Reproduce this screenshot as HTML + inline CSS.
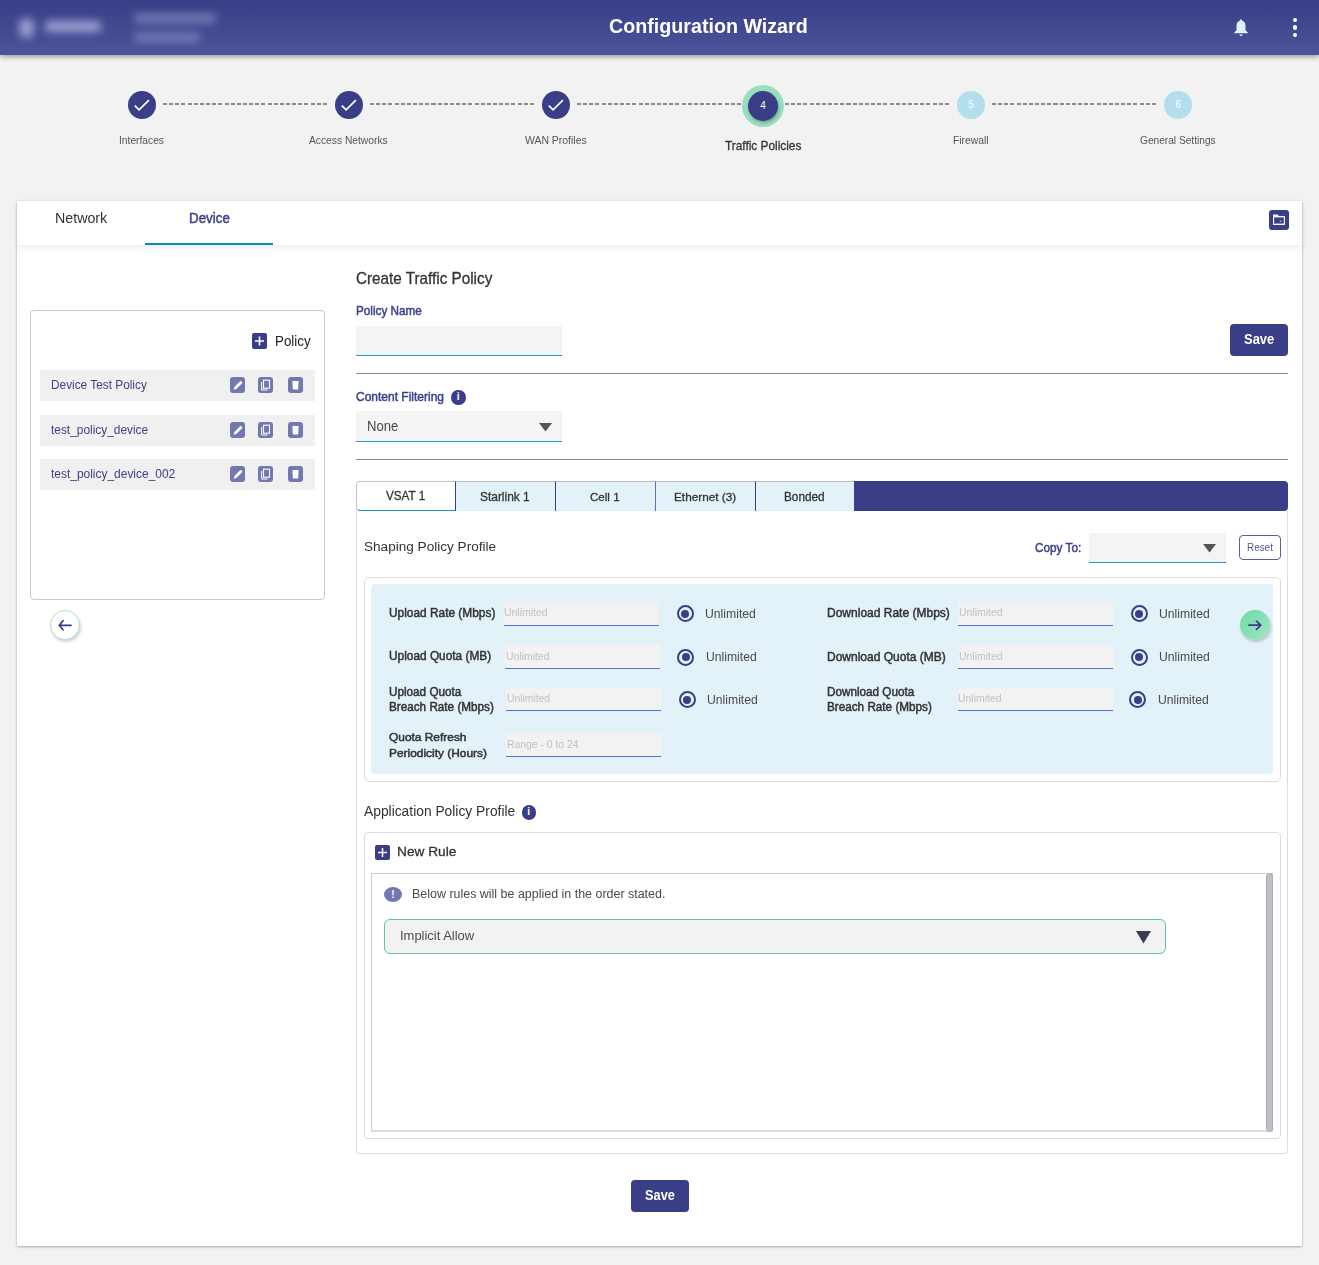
<!DOCTYPE html>
<html><head><meta charset="utf-8">
<style>
*{box-sizing:border-box;margin:0;padding:0}
html,body{width:1319px;height:1265px;overflow:hidden;background:#f2f2f2;font-family:"Liberation Sans",sans-serif;position:relative}
.a{position:absolute;white-space:nowrap;line-height:1}
.hdr{left:0;top:0;width:1319px;height:55px;background:linear-gradient(#393f88,#4d5398);box-shadow:0 2px 5px rgba(0,0,0,.35);z-index:2;overflow:hidden}
.blob{position:absolute;background:#9aa0d0;filter:blur(4px);border-radius:4px}
.title{left:0;width:1319px;text-align:center;color:#fff;font-size:20px;font-weight:bold}
.step{width:28px;height:28px;border-radius:50%;background:#393e87}
.lbl{font-size:11px;color:#555;text-align:center;width:200px}
.dash{height:2px;background:repeating-linear-gradient(90deg,#8c8c8c 0 4px,transparent 4px 6.15px)}
.card{left:17px;top:201px;width:1285px;height:1045px;background:#fff;box-shadow:0 1px 2px rgba(0,0,0,.28),0 0 3px rgba(0,0,0,.08)}
.tabbar{left:17px;top:201px;width:1285px;height:44px;background:#fff;box-shadow:0 3px 6px rgba(0,0,0,.07)}
.prow{left:40px;width:275px;height:31px;background:#f0f0f0}
.ptxt{left:51px;font-size:12.5px;color:#3e428a}
.ico{width:15px;height:16px;border-radius:3px;background:#7378b0}
.purple{color:#3d418a}
.inp{background:#f4f4f4;border-bottom:1px solid #1a9bd0}
.sinp{background:#f2f2f2;border-bottom:1px solid #5b6fdc}
.hr{height:1px;background:#8a8a8a}
.tab{top:481px;height:30px;background:#e3f1f8;font-size:13px;color:#333;text-align:center;line-height:30px}
.flab{font-size:13px;color:#333;font-weight:bold;line-height:15.5px}

.radio{width:17px;height:17px;border-radius:50%;border:2px solid #393e87;background:transparent}
.radio::after{content:"";position:absolute;left:2.5px;top:2.5px;width:8px;height:8px;border-radius:50%;background:#393e87}
.unl{font-size:13px;color:#444}

.t{transform-origin:0 0}
</style></head><body>
<div class="a hdr">
  <div class="blob" style="left:19px;top:18px;width:15px;height:20px;border-radius:8px"></div>
  <div class="blob" style="left:45px;top:21px;width:56px;height:11px"></div>
  <div class="blob" style="left:134px;top:14px;width:82px;height:9px;background:#777db5"></div>
  <div class="blob" style="left:134px;top:33px;width:66px;height:9px;background:#777db5"></div>
  <svg class="a" style="left:1233px;top:19px" width="16" height="18" viewBox="0 0 16 18"><path d="M8 0.5c.8 0 1.2.6 1.2 1.2 2.3.6 3.3 2.6 3.3 5v4.5l2.3 2.2v.8H1.2v-.8l2.3-2.2V6.7c0-2.4 1-4.4 3.3-5 0-.6.4-1.2 1.2-1.2zM6.5 15.6h3c0 1-.7 1.6-1.5 1.6s-1.5-.6-1.5-1.6z" fill="#e0f0f5"/></svg>
  <div class="a" style="left:1292.8px;top:17.8px;width:4.4px;height:4.4px;border-radius:50%;background:#fff"></div>
  <div class="a" style="left:1292.8px;top:25.3px;width:4.4px;height:4.4px;border-radius:50%;background:#fff"></div>
  <div class="a" style="left:1292.8px;top:33px;width:4.4px;height:4.4px;border-radius:50%;background:#fff"></div>
  
</div>
<!-- stepper -->
<div class="a dash" style="left:163px;top:103px;width:164px"></div>
<div class="a dash" style="left:370px;top:103px;width:164px"></div>
<div class="a dash" style="left:577px;top:103px;width:164px"></div>
<div class="a dash" style="left:785px;top:103px;width:164px"></div>
<div class="a dash" style="left:992px;top:103px;width:164px"></div>
<div class="a step" style="left:128px;top:91px"></div>
<div class="a step" style="left:335px;top:91px"></div>
<div class="a step" style="left:542px;top:91px"></div>
<div class="a step" style="left:957px;top:91px;background:#b3deec"></div>
<div class="a step" style="left:1164px;top:91px;background:#b3deec"></div>
<svg class="a" style="left:128px;top:91px" width="28" height="28"><path d="M6.8 14.6l4.3 4.3 9.8-9.8" stroke="#fff" stroke-width="1.7" fill="none"/></svg>
<svg class="a" style="left:335px;top:91px" width="28" height="28"><path d="M6.8 14.6l4.3 4.3 9.8-9.8" stroke="#fff" stroke-width="1.7" fill="none"/></svg>
<svg class="a" style="left:542px;top:91px" width="28" height="28"><path d="M6.8 14.6l4.3 4.3 9.8-9.8" stroke="#fff" stroke-width="1.7" fill="none"/></svg>
<div class="a" style="left:742px;top:85px;width:42px;height:42px;border-radius:50%;background:#98dfc0"></div>
<div class="a step" style="left:748px;top:91px;width:30px;height:30px;box-shadow:1px 2px 3px rgba(0,0,0,.25)"></div>
<div class="a" style="left:748px;top:101px;width:30px;text-align:center;color:#fff;font-size:10px">4</div>
<div class="a" style="left:957px;top:100px;width:28px;text-align:center;color:#fff;font-size:10px">5</div>
<div class="a" style="left:1164px;top:100px;width:28px;text-align:center;color:#fff;font-size:10px">6</div>

<div class="a card"></div>
<div class="a tabbar"></div>
<div class="a" style="left:145px;top:243px;width:128px;height:2px;background:#0a8abf"></div>
<div class="a" style="left:1269px;top:210px;width:20px;height:20px;border-radius:3px;background:#393e87"></div>
<svg class="a" style="left:1269px;top:210px" width="20" height="20"><path d="M4 4.8Q4 4.5 4.4 4.5H8.5L9.9 6H15.6Q15.9 6 15.9 6.4V14.8Q15.9 15.1 15.6 15.1H4.3Q4 15.1 4 14.8Z" fill="#fff"/><rect x="5.1" y="7.4" width="9.7" height="6.2" fill="#393e87"/><circle cx="11.6" cy="11.2" r="0.9" fill="#9a9dc8"/></svg>

<!-- left panel -->
<div class="a" style="left:30px;top:310px;width:295px;height:290px;border:1px solid #c8c8c8;border-radius:4px"></div>
<div class="a" style="left:252px;top:333px;width:15px;height:16px;border-radius:2px;background:#393e87"></div>
<svg class="a" style="left:252px;top:333px" width="15" height="16"><path d="M7.5 3.5v9M3 8h9" stroke="#fff" stroke-width="1.6"/></svg>
<div class="a prow" style="top:370px"></div>
<div class="a prow" style="top:414.5px"></div>
<div class="a prow" style="top:459px"></div>
<div class="a ico" style="left:229.5px;top:377px"></div>
<svg class="a" style="left:229.5px;top:377px" width="15" height="16"><path d="M3.6 12.7L4.4 9.9L10.6 3.7L12.6 5.7L6.4 11.9Z" fill="#fff"/></svg>
<div class="a ico" style="left:258px;top:377px"></div>
<svg class="a" style="left:258px;top:377px" width="15" height="16"><rect x="5.5" y="3.2" width="6" height="8" fill="none" stroke="#fff" stroke-width="1.1"/><path d="M3.6 5v8h6" fill="none" stroke="#fff" stroke-width="1"/></svg>
<div class="a ico" style="left:288px;top:377px"></div>
<svg class="a" style="left:288px;top:377px" width="15" height="16"><path d="M4.4 4h6.2l-.4 8.4H4.8z" fill="#fff"/></svg>
<div class="a ico" style="left:229.5px;top:421.5px"></div>
<svg class="a" style="left:229.5px;top:421.5px" width="15" height="16"><path d="M3.6 12.7L4.4 9.9L10.6 3.7L12.6 5.7L6.4 11.9Z" fill="#fff"/></svg>
<div class="a ico" style="left:258px;top:421.5px"></div>
<svg class="a" style="left:258px;top:421.5px" width="15" height="16"><rect x="5.5" y="3.2" width="6" height="8" fill="none" stroke="#fff" stroke-width="1.1"/><path d="M3.6 5v8h6" fill="none" stroke="#fff" stroke-width="1"/></svg>
<div class="a ico" style="left:288px;top:421.5px"></div>
<svg class="a" style="left:288px;top:421.5px" width="15" height="16"><path d="M4.4 4h6.2l-.4 8.4H4.8z" fill="#fff"/></svg>
<div class="a ico" style="left:229.5px;top:466px"></div>
<svg class="a" style="left:229.5px;top:466px" width="15" height="16"><path d="M3.6 12.7L4.4 9.9L10.6 3.7L12.6 5.7L6.4 11.9Z" fill="#fff"/></svg>
<div class="a ico" style="left:258px;top:466px"></div>
<svg class="a" style="left:258px;top:466px" width="15" height="16"><rect x="5.5" y="3.2" width="6" height="8" fill="none" stroke="#fff" stroke-width="1.1"/><path d="M3.6 5v8h6" fill="none" stroke="#fff" stroke-width="1"/></svg>
<div class="a ico" style="left:288px;top:466px"></div>
<svg class="a" style="left:288px;top:466px" width="15" height="16"><path d="M4.4 4h6.2l-.4 8.4H4.8z" fill="#fff"/></svg>

<!-- back arrow -->
<div class="a" style="left:50px;top:610px;width:30px;height:30px;border-radius:50%;background:#fff;border:1px solid #a8e6c8;box-shadow:1px 2px 3px rgba(0,0,0,.18)"></div>
<svg class="a" style="left:50px;top:610px" width="30" height="30"><path d="M21 15.3H9.8M13 10.8L9.3 15.3L13 19.8" stroke="#393e87" stroke-width="1.8" stroke-linecap="round" stroke-linejoin="round" fill="none"/></svg>

<!-- main form -->
<div class="a inp" style="left:356px;top:326px;width:206px;height:30px"></div>
<div class="a" style="left:1230px;top:324px;width:58px;height:32px;border-radius:4px;background:#393e87"></div>
<div class="a hr" style="left:356px;top:373px;width:932px"></div>
<div class="a" style="left:451px;top:390px;width:14.5px;height:14.5px;border-radius:50%;background:#393e87;color:#fff;font-size:10px;font-weight:bold;text-align:center;line-height:14.5px">i</div>
<div class="a inp" style="left:356px;top:411px;width:206px;height:31px"></div>
<svg class="a" style="left:539px;top:422.5px" width="13" height="9"><path d="M0 0h13L6.5 8.5z" fill="#555"/></svg>
<div class="a hr" style="left:356px;top:459px;width:932px"></div>

<!-- tabs -->
<div class="a" style="left:456px;top:481px;width:831.5px;height:30px;border-radius:0 4px 4px 0;background:#393e87"></div>
<div class="a" style="left:356px;top:481px;width:99px;height:30px;background:#fff;border:1px solid #c4c4d0;border-right:none;border-bottom:1.5px solid #1a93c8;border-radius:4px 0 0 4px"></div>
<div class="a tab" style="left:455px;width:100px;border-top:1px solid #bbb;border-left:1px solid #393e87"></div>
<div class="a tab" style="left:555px;width:100px;border-top:1px solid #bbb;border-left:1px solid #393e87"></div>
<div class="a tab" style="left:655px;width:100px;border-top:1px solid #bbb;border-left:1px solid #6a6ea8"></div>
<div class="a tab" style="left:755px;width:99px;border-top:1px solid #bbb;border-left:1.5px solid #393e87"></div>

<!-- outer content box -->
<div class="a" style="left:356px;top:511px;width:932px;height:642.5px;border:1px solid #ddd;border-top:none;border-radius:0 0 4px 4px"></div>
<div class="a inp" style="left:1089px;top:532.5px;width:137px;height:30.5px"></div>
<svg class="a" style="left:1203px;top:544px" width="13" height="9"><path d="M0 0h13L6.5 8.5z" fill="#555"/></svg>
<div class="a" style="left:1239px;top:534.5px;width:42px;height:25.5px;border:1px solid #5a5ea0;border-radius:4px"></div>

<div class="a" style="left:363.5px;top:576.5px;width:917px;height:205px;border:1px solid #ddd;border-radius:5px"></div>
<div class="a" style="left:371px;top:584px;width:902px;height:189.5px;background:#e3f1f8;border-radius:4px"></div>

<!-- shaping fields -->
<div class="a sinp" style="left:504px;top:602px;width:155px;height:24px"></div>
<div class="a radio" style="left:676.5px;top:605px"></div>
<div class="a sinp" style="left:505px;top:645px;width:155px;height:24px"></div>
<div class="a radio" style="left:677px;top:648.5px"></div>
<div class="a sinp" style="left:506px;top:688px;width:155px;height:23px"></div>
<div class="a radio" style="left:678.5px;top:691px"></div>
<div class="a sinp" style="left:506px;top:733px;width:155px;height:24px"></div>
<div class="a sinp" style="left:958px;top:602px;width:155px;height:24px"></div>
<div class="a radio" style="left:1130.5px;top:605px"></div>
<div class="a sinp" style="left:958px;top:645px;width:155px;height:24px"></div>
<div class="a radio" style="left:1130.5px;top:648.5px"></div>
<div class="a sinp" style="left:957.5px;top:688px;width:155px;height:23px"></div>
<div class="a radio" style="left:1129px;top:691px"></div>
<div class="a" style="left:1239.5px;top:610px;width:30px;height:30px;border-radius:50%;background:linear-gradient(135deg,#6cdba5,#a3e4c6);box-shadow:1px 2px 3px rgba(0,0,0,.2)"></div>
<svg class="a" style="left:1239.5px;top:610px" width="30" height="30"><path d="M9 15.2H20.6M16.4 11.1L20.8 15.2L16.4 19.3" stroke="#393e87" stroke-width="1.7" stroke-linecap="round" stroke-linejoin="round" fill="none"/></svg>

<!-- application policy profile -->
<div class="a" style="left:521.5px;top:805px;width:14.5px;height:14.5px;border-radius:50%;background:#393e87;color:#fff;font-size:10px;font-weight:bold;text-align:center;line-height:14.5px">i</div>
<div class="a" style="left:363.5px;top:831.5px;width:917.5px;height:307px;border:1px solid #ddd;border-radius:4px"></div>
<div class="a" style="left:375px;top:845px;width:15px;height:15px;border-radius:2px;background:#393e87"></div>
<svg class="a" style="left:375px;top:845px" width="15" height="15"><path d="M7.5 3v9M3 7.5h9" stroke="#fff" stroke-width="1.5"/></svg>
<div class="a" style="left:371px;top:872.5px;width:902px;height:259px;border:1px solid #ccc;border-bottom:2px solid #ddd"></div>
<div class="a" style="left:1265.5px;top:873px;width:7px;height:258.5px;border-radius:3.5px;background:#c0c0c0;border:1px solid #a6a9cc"></div>
<div class="a" style="left:384px;top:887px;width:18px;height:15px;border-radius:50%;background:#7478b0;color:#fff;font-size:10px;font-weight:bold;text-align:center;line-height:15px">!</div>
<div class="a" style="left:384px;top:919px;width:782px;height:34.5px;border:1px solid #5cc990;border-radius:6px;background:#f2f2f2"></div>
<svg class="a" style="left:1135.5px;top:930.5px" width="15" height="13"><path d="M0 0h15L7.5 12.6z" fill="#353e50"/></svg>

<!-- bottom save -->
<div class="a" style="left:631px;top:1179.5px;width:58px;height:32.5px;border-radius:4px;background:#393e87"></div>

<div class="a t" style="left:608.80px;top:16.01px;font-size:20.49px;font-weight:bold;color:#fff;transform:scaleX(0.9603);z-index:3">Configuration Wizard</div>
<div class="a t" style="left:118.90px;top:135.02px;font-size:11.34px;color:#555;transform:scaleX(0.9039);">Interfaces</div>
<div class="a t" style="left:309.00px;top:135.02px;font-size:11.34px;color:#555;transform:scaleX(0.9053);">Access Networks</div>
<div class="a t" style="left:525.00px;top:135.02px;font-size:11.34px;color:#555;transform:scaleX(0.9212);">WAN Profiles</div>
<div class="a t" style="left:952.70px;top:135.02px;font-size:11.34px;color:#555;transform:scaleX(0.9115);">Firewall</div>
<div class="a t" style="left:1140.00px;top:135.02px;font-size:11.34px;color:#555;transform:scaleX(0.8964);">General Settings</div>
<div class="a t" style="left:724.80px;top:139.01px;font-size:13.37px;-webkit-text-stroke:0.3px #333;color:#333;transform:scaleX(0.8863);">Traffic Policies</div>
<div class="a t" style="left:55.00px;top:212.01px;font-size:13.81px;color:#333;transform:scaleX(1.0320);">Network</div>
<div class="a t" style="left:188.90px;top:210.00px;font-size:15.26px;-webkit-text-stroke:0.5px #3d418a;color:#3d418a;transform:scaleX(0.8767);">Device</div>
<div class="a t" style="left:274.60px;top:334.00px;font-size:14.53px;color:#222;transform:scaleX(0.9193);">Policy</div>
<div class="a t" style="left:51.30px;top:378.00px;font-size:13.23px;color:#3e428a;transform:scaleX(0.8956);">Device Test Policy</div>
<div class="a t" style="left:51.00px;top:423.01px;font-size:13.23px;color:#3e428a;transform:scaleX(0.8994);">test_policy_device</div>
<div class="a t" style="left:51.00px;top:467.02px;font-size:13.23px;color:#3e428a;transform:scaleX(0.9040);">test_policy_device_002</div>
<div class="a t" style="left:355.90px;top:271.00px;font-size:15.99px;-webkit-text-stroke:0.3px #333;color:#333;transform:scaleX(0.9547);">Create Traffic Policy</div>
<div class="a t" style="left:356.00px;top:304.01px;font-size:13.37px;-webkit-text-stroke:0.5px #3d418a;color:#3d418a;transform:scaleX(0.8780);">Policy Name</div>
<div class="a t" style="left:1243.80px;top:332.00px;font-size:14.97px;font-weight:bold;color:#fff;transform:scaleX(0.8668);">Save</div>
<div class="a t" style="left:356.10px;top:390.01px;font-size:13.23px;-webkit-text-stroke:0.5px #3d418a;color:#3d418a;transform:scaleX(0.9078);">Content Filtering</div>
<div class="a t" style="left:366.60px;top:418.01px;font-size:15.26px;color:#4a4a4a;transform:scaleX(0.8605);">None</div>
<div class="a t" style="left:385.80px;top:489.01px;font-size:13.37px;-webkit-text-stroke:0.3px #333;color:#333;transform:scaleX(0.8740);">VSAT 1</div>
<div class="a t" style="left:480.30px;top:491.00px;font-size:12.65px;-webkit-text-stroke:0.3px #333;color:#333;transform:scaleX(0.9430);">Starlink 1</div>
<div class="a t" style="left:590.30px;top:491.01px;font-size:11.63px;-webkit-text-stroke:0.3px #333;color:#333;transform:scaleX(0.9955);">Cell 1</div>
<div class="a t" style="left:673.70px;top:491.01px;font-size:11.63px;-webkit-text-stroke:0.3px #333;color:#333;transform:scaleX(1.0131);">Ethernet (3)</div>
<div class="a t" style="left:784.20px;top:491.00px;font-size:12.65px;-webkit-text-stroke:0.3px #333;color:#333;transform:scaleX(0.9335);">Bonded</div>
<div class="a t" style="left:363.50px;top:540.00px;font-size:13.08px;color:#333;transform:scaleX(1.0381);">Shaping Policy Profile</div>
<div class="a t" style="left:1034.90px;top:541.02px;font-size:13.66px;-webkit-text-stroke:0.5px #3d418a;color:#3d418a;transform:scaleX(0.8609);">Copy To:</div>
<div class="a t" style="left:1247.20px;top:542.02px;font-size:11.34px;color:#555a8a;transform:scaleX(0.8746);">Reset</div>
<div class="a t" style="left:388.90px;top:606.01px;font-size:13.23px;-webkit-text-stroke:0.5px #333;color:#333;transform:scaleX(0.8990);">Upload Rate (Mbps)</div>
<div class="a t" style="left:389.00px;top:650.01px;font-size:12.50px;-webkit-text-stroke:0.5px #333;color:#333;transform:scaleX(0.9490);">Upload Quota (MB)</div>
<div class="a t" style="left:389.00px;top:685.00px;font-size:12.21px;line-height:15px;-webkit-text-stroke:0.5px #333;color:#333;transform:scaleX(0.9602);">Upload Quota<br>Breach Rate (Mbps)</div>
<div class="a t" style="left:389.00px;top:730.01px;font-size:11.48px;line-height:15.8px;-webkit-text-stroke:0.5px #333;color:#333;transform:scaleX(1.0388);">Quota Refresh<br>Periodicity (Hours)</div>
<div class="a t" style="left:826.50px;top:606.02px;font-size:13.23px;-webkit-text-stroke:0.5px #333;color:#333;transform:scaleX(0.9086);">Download Rate (Mbps)</div>
<div class="a t" style="left:826.50px;top:651.01px;font-size:12.79px;-webkit-text-stroke:0.5px #333;color:#333;transform:scaleX(0.9396);">Download Quota (MB)</div>
<div class="a t" style="left:826.50px;top:685.01px;font-size:12.65px;line-height:15.3px;-webkit-text-stroke:0.5px #333;color:#333;transform:scaleX(0.9271);">Download Quota<br>Breach Rate (Mbps)</div>
<div class="a t" style="left:504.40px;top:608.01px;font-size:10.32px;color:#c2c2c2;transform:scaleX(1.0137);">Unlimited</div>
<div class="a t" style="left:505.60px;top:651.01px;font-size:11.34px;color:#c2c2c2;transform:scaleX(0.9206);">Unlimited</div>
<div class="a t" style="left:506.90px;top:693.01px;font-size:10.61px;color:#c2c2c2;transform:scaleX(0.9746);">Unlimited</div>
<div class="a t" style="left:506.90px;top:739.00px;font-size:10.76px;color:#c2c2c2;transform:scaleX(0.9656);">Range - 0 to 24</div>
<div class="a t" style="left:958.80px;top:608.01px;font-size:10.32px;color:#c2c2c2;transform:scaleX(1.0137);">Unlimited</div>
<div class="a t" style="left:958.80px;top:651.01px;font-size:11.34px;color:#c2c2c2;transform:scaleX(0.9227);">Unlimited</div>
<div class="a t" style="left:958.10px;top:693.01px;font-size:10.61px;color:#c2c2c2;transform:scaleX(0.9859);">Unlimited</div>
<div class="a t" style="left:704.80px;top:607.00px;font-size:13.52px;color:#4a4a4a;transform:scaleX(0.9034);">Unlimited</div>
<div class="a t" style="left:705.50px;top:650.01px;font-size:13.37px;color:#4a4a4a;transform:scaleX(0.9097);">Unlimited</div>
<div class="a t" style="left:706.60px;top:693.00px;font-size:13.52px;color:#4a4a4a;transform:scaleX(0.9017);">Unlimited</div>
<div class="a t" style="left:1159.00px;top:607.00px;font-size:13.08px;color:#4a4a4a;transform:scaleX(0.9317);">Unlimited</div>
<div class="a t" style="left:1159.00px;top:650.01px;font-size:13.23px;color:#4a4a4a;transform:scaleX(0.9215);">Unlimited</div>
<div class="a t" style="left:1157.90px;top:693.01px;font-size:13.66px;color:#4a4a4a;transform:scaleX(0.8903);">Unlimited</div>
<div class="a t" style="left:363.60px;top:805.01px;font-size:13.95px;color:#333;transform:scaleX(0.9909);">Application Policy Profile</div>
<div class="a t" style="left:396.80px;top:845.02px;font-size:13.66px;-webkit-text-stroke:0.3px #333;color:#333;transform:scaleX(1.0029);">New Rule</div>
<div class="a t" style="left:411.50px;top:888.01px;font-size:12.65px;color:#4a4a4a;transform:scaleX(0.9853);">Below rules will be applied in the order stated.</div>
<div class="a t" style="left:399.70px;top:930.02px;font-size:12.21px;color:#4a4a4a;transform:scaleX(1.0612);">Implicit Allow</div>
<div class="a t" style="left:644.60px;top:1188.01px;font-size:14.83px;font-weight:bold;color:#fff;transform:scaleX(0.8637);">Save</div>
</body></html>
